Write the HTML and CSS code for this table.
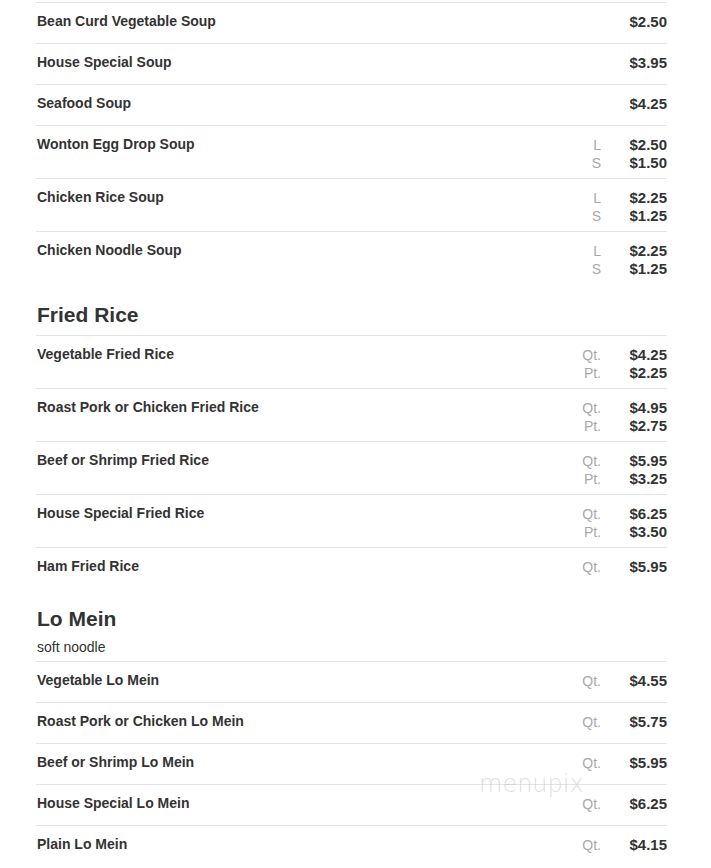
FILE: index.html
```html
<!DOCTYPE html>
<html>
<head>
<meta charset="utf-8">
<link rel="stylesheet" href="styles.css">
</head>
<body>
<div class="menu">
  <div class="section first">
    <div class="item"><div class="name">Bean Curd Vegetable Soup</div><div class="prices"><span class="lbl"></span><span class="price">$2.50</span></div></div>
    <div class="item"><div class="name">House Special Soup</div><div class="prices"><span class="lbl"></span><span class="price">$3.95</span></div></div>
    <div class="item"><div class="name">Seafood Soup</div><div class="prices"><span class="lbl"></span><span class="price">$4.25</span></div></div>
    <div class="item"><div class="name">Wonton Egg Drop Soup</div><div class="prices"><span class="lbl">L</span><span class="price">$2.50</span><span class="lbl">S</span><span class="price">$1.50</span></div></div>
    <div class="item"><div class="name">Chicken Rice Soup</div><div class="prices"><span class="lbl">L</span><span class="price">$2.25</span><span class="lbl">S</span><span class="price">$1.25</span></div></div>
    <div class="item"><div class="name">Chicken Noodle Soup</div><div class="prices"><span class="lbl">L</span><span class="price">$2.25</span><span class="lbl">S</span><span class="price">$1.25</span></div></div>
  </div>

  <div class="section">
    <div class="head"><h2>Fried Rice</h2></div>
    <div class="item"><div class="name">Vegetable Fried Rice</div><div class="prices"><span class="lbl">Qt.</span><span class="price">$4.25</span><span class="lbl">Pt.</span><span class="price">$2.25</span></div></div>
    <div class="item"><div class="name">Roast Pork or Chicken Fried Rice</div><div class="prices"><span class="lbl">Qt.</span><span class="price">$4.95</span><span class="lbl">Pt.</span><span class="price">$2.75</span></div></div>
    <div class="item"><div class="name">Beef or Shrimp Fried Rice</div><div class="prices"><span class="lbl">Qt.</span><span class="price">$5.95</span><span class="lbl">Pt.</span><span class="price">$3.25</span></div></div>
    <div class="item"><div class="name">House Special Fried Rice</div><div class="prices"><span class="lbl">Qt.</span><span class="price">$6.25</span><span class="lbl">Pt.</span><span class="price">$3.50</span></div></div>
    <div class="item"><div class="name">Ham Fried Rice</div><div class="prices"><span class="lbl">Qt.</span><span class="price">$5.95</span></div></div>
  </div>

  <div class="section">
    <div class="head with-desc"><h2>Lo Mein</h2><p class="desc">soft noodle</p></div>
    <div class="item"><div class="name">Vegetable Lo Mein</div><div class="prices"><span class="lbl">Qt.</span><span class="price">$4.55</span></div></div>
    <div class="item"><div class="name">Roast Pork or Chicken Lo Mein</div><div class="prices"><span class="lbl">Qt.</span><span class="price">$5.75</span></div></div>
    <div class="item"><div class="name">Beef or Shrimp Lo Mein</div><div class="prices"><span class="lbl">Qt.</span><span class="price">$5.95</span></div></div>
    <div class="item"><div class="name">House Special Lo Mein</div><div class="prices"><span class="lbl">Qt.</span><span class="price">$6.25</span></div></div>
    <div class="item"><div class="name">Plain Lo Mein</div><div class="prices"><span class="lbl">Qt.</span><span class="price">$4.15</span></div></div>
  </div>
</div>
<div class="watermark">menupix</div>
</body>
</html>
```

FILE: styles.css
```css
html, body {
  margin: 0;
  padding: 0;
  background: #fff;
}
body {
  font-family: "Liberation Sans", Arial, sans-serif;
  color: #333;
  position: relative;
  height: 868px;
  overflow: hidden;
}
.menu {
  margin-left: 36px;
  width: 631px;
  padding-top: 2px;
}
.section .head {
  margin-top: 20px;
  padding-bottom: 9px;
  padding-left: 1px;
}
.section h2 {
  margin: 0;
  font-size: 21px;
  line-height: 22px;
  font-weight: bold;
  color: #333;
}
.head.with-desc {
  padding-bottom: 5px;
}
.desc {
  margin: 8px 0 0;
  font-size: 14px;
  line-height: 18px;
  color: #333;
}
.item {
  display: flex;
  align-items: flex-start;
  border-top: 1px solid #e4e4e4;
  padding: 9px 0 7px 1px;
  min-height: 24px;
}
.name {
  flex: 1;
  font-size: 14px;
  line-height: 18px;
  font-weight: bold;
  color: #333;
}
.prices {
  display: grid;
  grid-template-columns: auto 66px;
  line-height: 18px;
  margin-top: 1px;
  margin-bottom: -1px;
}
.lbl {
  text-align: right;
  font-size: 14px;
  color: #a8a8a8;
}
.price {
  text-align: right;
  font-size: 15px;
  font-weight: bold;
  color: #333;
}
.watermark {
  position: absolute;
  left: 479px;
  top: 770px;
  font-family: "DejaVu Sans", sans-serif;
  font-weight: 200;
  font-size: 24px;
  color: rgba(200, 200, 200, 0.6);
}
```
